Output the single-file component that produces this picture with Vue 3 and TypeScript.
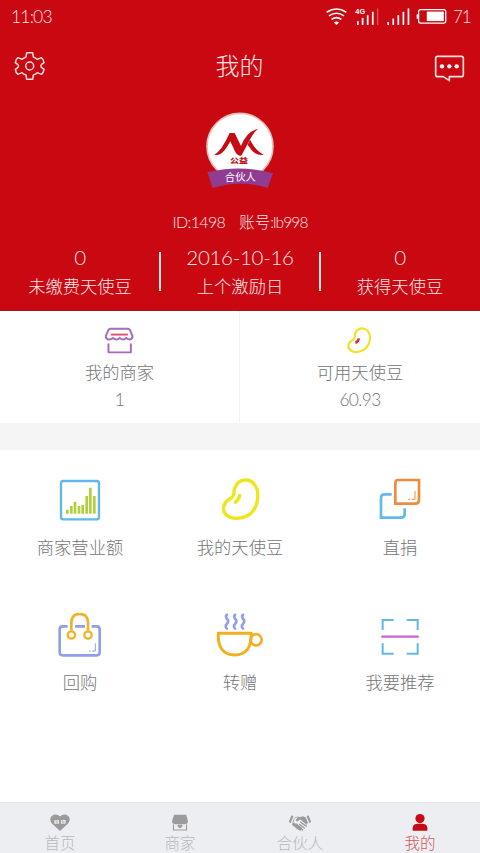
<script setup lang="ts">
interface Stat { value: string; label: string }
interface Entry { icon: string; label: string }

const stats: Stat[] = [
  { value: '0', label: '未缴费天使豆' },
  { value: '2016-10-16', label: '上个激励日' },
  { value: '0', label: '获得天使豆' },
]

const entries: Entry[] = [
  { icon: 'chart', label: '商家营业额' },
  { icon: 'bean', label: '我的天使豆' },
  { icon: 'donate', label: '直捐' },
  { icon: 'bag', label: '回购' },
  { icon: 'cup', label: '转赠' },
  { icon: 'scan', label: '我要推荐' },
]

const tabs: Entry[] = [
  { icon: 'heart', label: '首页' },
  { icon: 'shop', label: '商家' },
  { icon: 'hands', label: '合伙人' },
  { icon: 'user', label: '我的' },
]
const activeTab = 'user'
</script>

<template>
  <div class="screen">
    <header class="hero">
      <div class="status">
        <span class="num clock">11:03</span>
        <div class="status-right">
          <svg class="wifi" viewBox="256 20 70 58" fill="none" stroke="#fff" stroke-width="5">
            <path d="M261 36Q291 16 321 36M268 47Q291 31 314 47M276 58Q291 47 306 58" />
            <path d="M283 67Q291 61 299 67L291 75Z" fill="#fff" stroke="none" />
          </svg>
          <svg class="cell" viewBox="346 22 74 56">
            <g fill="#fff"><rect x="352" y="64" width="5" height="11" /><rect x="366" y="54" width="5" height="21" /><rect x="381" y="46" width="5" height="29" /><rect x="396" y="36" width="5" height="39" /></g>
            <rect x="411" y="26" width="4" height="49" fill="#e0525a" />
            <text x="347" y="42" font-size="19" font-weight="700" fill="#fff" textLength="29" lengthAdjust="spacingAndGlyphs">4G</text>
          </svg>
          <svg class="bars" viewBox="440 22 74 56" fill="#fff">
            <rect x="444" y="66" width="5" height="9" /><rect x="459" y="56" width="5" height="19" /><rect x="474" y="46" width="5" height="29" /><rect x="489" y="36" width="5" height="39" /><rect x="504" y="26" width="5" height="49" />
          </svg>
          <svg class="battery" viewBox="529 24 96 52">
            <rect x="536" y="29" width="83" height="41" rx="6" fill="none" stroke="#fff" stroke-width="4" />
            <rect x="530" y="43" width="6" height="14" rx="2" fill="#fff" /><rect x="561" y="35" width="52" height="29" fill="#fff" />
          </svg>
          <span class="num level">71</span>
        </div>
      </div>

      <div class="titlebar">
        <svg class="gear" viewBox="42 153 93 90" fill="none" stroke="#ffe0e0" stroke-width="4.5" stroke-linejoin="round">
          <path d="M80 158h18l2 13q7 3 12 7l12-5q7 5 8 15l-8 6q-3 4 0 8l8 6q-1 10-8 15l-12-5q-5 5-12 7l-2 13h-18l-2-13q-7-2-12-7l-12 5q-7-5-8-15l8-6q3-4 0-8l-8-6q1-10 8-15l12 5q5-4 12-7Z" />
          <circle cx="89" cy="198" r="12" />
        </svg>
        <h1>我的</h1>
        <svg class="message" viewBox="582 161 93 84">
          <path d="M593 168h71q6 0 6 6v49q0 6-6 6h-36v12l-18-12h-17q-6 0-6-6v-49q0-6 6-6Z" fill="none" stroke="#ffe0e0" stroke-width="5" stroke-linejoin="round" />
          <g fill="#fff"><circle cx="606" cy="198" r="6.5" /><circle cx="628" cy="198" r="6.5" /><circle cx="650" cy="198" r="6.5" /></g>
        </svg>
      </div>

      <svg class="badge" viewBox="135 33 210 234">
        <circle cx="240" cy="139" r="99" fill="#fff" stroke="#e6bcb9" stroke-width="5" />
        <g fill="#c80a14">
          <path d="M163 164Q184 154 209 99H224L243 138Q260 94 294 87Q280 97 266 126L244 167Q231 168 224 152L211 124Q193 158 179 163Q171 166 163 164Z" />
          <path d="M270 119Q288 154 311 164Q289 168 275 151L263 134Z" />
        </g>
        <text x="237" y="188" text-anchor="middle" class="badge-mark" textLength="54" lengthAdjust="spacingAndGlyphs">公益</text>
        <path d="M142 217Q240 192 339 220L323 264Q240 238 158 264Z" fill="#903c91" />
        <text x="241" y="244" text-anchor="middle" class="badge-role" textLength="93">合伙人</text>
      </svg>

      <div class="account"><span class="id">ID:1498</span><span class="name">账号<i>:lb998</i></span></div>

      <div class="stats">
        <div v-for="(s, i) in stats" :key="i" class="stat">
          <span class="num">{{ s.value }}</span>
          <span>{{ s.label }}</span>
        </div>
      </div>
    </header>

    <section class="summary">
      <div class="card">
        <svg class="stall" viewBox="312 46 93 88" fill="none" stroke="#a76cc0" stroke-width="6" stroke-linecap="round" stroke-linejoin="round">
          <path d="M331 54h54q3 0 5 4l8 19q0 9-9 10-7 0-10-5-4 5-10 5-7 0-10-5-4 5-10 5t-10-5q-4 5-11 5-11-1-11-11l8-18q2-4 6-4ZM325 101v25h68v-25" />
          <path d="M332 72h52" stroke="#e05275" stroke-linecap="butt" />
        </svg>
        <span class="label">我的商家</span>
        <span class="num">1</span>
      </div>
      <div class="card">
        <svg class="bean-small" viewBox="319 44 84 94" fill="none" stroke-linecap="round">
          <path d="M347 65Q355 50 371 52Q390 55 393 77Q395 104 375 120Q354 134 334 125Q318 116 326 99Q330 93 339 88Q346 82 344 74Q344 69 347 65Z" stroke="#efe229" stroke-width="7" />
          <path d="M357 84Q356 95 346 99" stroke="#d92b4b" stroke-width="8" stroke-linecap="butt" />
        </svg>
        <span class="label">可用天使豆</span>
        <span class="num">60.93</span>
      </div>
    </section>

    <main class="grid">
      <div v-for="e in entries" :key="e.icon" class="entry">
        <svg v-if="e.icon === 'chart'" viewBox="174 54 132 132">
          <rect x="183" y="63" width="114" height="115" rx="7" fill="none" stroke="#61b7e8" stroke-width="7" />
          <path d="M202 161v-12M214 161v-23M225 161v-36M237 161v-23M248 161v-26M260 161v-53M271 161v-78M283 161v-53" stroke="#b1d13c" stroke-width="8" />
        </svg>
        <svg v-else-if="e.icon === 'bean'" viewBox="654 54 132 132" fill="none" stroke="#efe51d" stroke-linecap="round">
          <path d="M705 83Q714 60 735 60Q762 59 772 91Q779 134 752 161Q725 181 691 172Q667 162 671 140Q674 126 687 118Q704 110 702 94Q702 88 705 83Z" stroke-width="10" />
          <path d="M719 106Q717 119 706 127" stroke-width="10" />
        </svg>
        <svg v-else-if="e.icon === 'donate'" viewBox="414 54 132 132" fill="none" stroke-width="8">
          <path d="M455 103H434q-11 0-11 11v59h60q11 0 11-11v-17" stroke="#63b9e8" />
          <path d="M474 60h63v60q0 11-11 11h-60V70q0-10 8-10Z" stroke="#ee8c3d" />
          <path d="M525 93v25h-10M511 118h-6" stroke="#ee8c3d" stroke-width="3" />
        </svg>
        <svg v-else-if="e.icon === 'bag'" viewBox="174 51 132 132" fill="none" stroke-width="8">
          <path d="M203 91h-15q-9 0-9 9v69q0 9 9 9h102q9 0 9-9v-69q0-9-9-9h-15M225 91h30" stroke="#939fe4" />
          <path d="M214 103V78Q216 54 239 54T264 78V103" stroke="#f1b225" /><circle cx="214" cy="117" r="11" stroke="#f1b225" stroke-width="7" /><circle cx="264" cy="117" r="11" stroke="#f1b225" stroke-width="7" />
          <path d="M286 142v23h-10M272 165h-5" stroke="#939fe4" stroke-width="3" />
        </svg>
        <svg v-else-if="e.icon === 'cup'" class="cup" viewBox="646 52 146 136" fill="none" stroke-linecap="round">
          <path d="M653 113H753Q755 178 703 179Q650 178 653 113Z" stroke="#f2b020" stroke-width="9" stroke-linejoin="round" />
          <circle cx="768" cy="133" r="17" stroke="#f2b020" stroke-width="8" />
          <path d="M679 57q-5 5 0 12 8 8 0 16-7 7 0 14M704 57q-5 5 0 12 8 8 0 16-7 7 0 14M728 57q-5 5 0 12 8 8 0 16-7 7 0 14" stroke="#939fe8" stroke-width="8" />
        </svg>
        <svg v-else viewBox="414 54 132 132" fill="none">
          <path d="M428 105V75h33M500 75h33v30M428 145v31h33M500 176h33v-31" stroke="#5eb9e7" stroke-width="6" />
          <path d="M424 125h112" stroke="#cb65cc" stroke-width="7" />
        </svg>
        <span>{{ e.label }}</span>
      </div>
    </main>

    <nav class="tabs">
      <div v-for="t in tabs" :key="t.icon" :class="['tab', { active: t.icon === activeTab }]">
        <svg v-if="t.icon === 'heart'" viewBox="144 54 72 58">
          <path d="M180 109L156 87Q145 72 155 63Q168 54 180 65Q192 54 205 63Q215 72 204 87Z" fill="currentColor" />
          <path d="M163 75h14v12h-14zM183 75h14v12h-14z" fill="#edeef2" /><path d="M166 78h3v3M172 77l3 4M168 84h6M187 76v5h7M187 84h6" stroke="currentColor" stroke-width="2" fill="none" />
        </svg>
        <svg v-else-if="t.icon === 'shop'" viewBox="504 54 72 58">
          <path d="M522 59h37l5 19q1 10-8 10H524q-9 0-8-10Z" fill="currentColor" />
          <path d="M520 89v17h40V89" fill="none" stroke="currentColor" stroke-width="3.5" /><path d="M540 101l-7-6q-2-5 2-6l5 2 5-2q4 1 2 6Z" fill="currentColor" />
        </svg>
        <svg v-else-if="t.icon === 'hands'" viewBox="864 54 72 58">
          <g fill="currentColor"><path d="M874 61l6 3-9 21-5-4ZM926 61l-6 3 9 21 5-4Z" />
          <path d="M884 68l10-3 6 2 8-3 10 4 6 16-4 6-19-16-9 5q-6 1-5-4l7-9-10 4-5 14-3-2Z" />
          <path d="M876 86l6-3 4 4 5-1 3 5 5 1 2 5 4 1 1 7-5 3-8-4-9-7-8-6Z" /></g>
          <path d="M902 82l17 12M899 89l14 11M898 97l10 9" stroke="currentColor" stroke-width="4" stroke-linecap="round" />
        </svg>
        <svg v-else viewBox="1224 54 72 58" fill="currentColor">
          <circle cx="1260" cy="71" r="14" /><path d="M1238 108Q1235 87 1252 87H1268Q1286 88 1282 108Z" />
        </svg>
        <span>{{ t.label }}</span>
      </div>
    </nav>
  </div>
</template>

<style>
body { margin: 0; background: #fff; }
</style>

<style scoped>
.screen { width: 480px; height: 853px; display: flex; flex-direction: column; overflow: hidden; background: #fff; color: #757575; font-family: Lato, "Noto Sans CJK SC", sans-serif; font-weight: 300; font-size: 17.3px; }
svg { display: block; flex: none; }
span { white-space: nowrap; }
.hero { height: 311px; box-sizing: border-box; background: #c90812; color: #ffe5e5; display: flex; flex-direction: column; align-items: center; flex: none; border-bottom: 1px solid #9d1422; }
.status { width: 100%; height: 33px; display: flex; justify-content: space-between; align-items: center; box-sizing: border-box; padding: 0 10px 0 11px; font-size: 18px; }
.clock { font-size: 17.5px; letter-spacing: -.8px; }
.status-right { display: flex; align-items: center; }
.wifi { width: 23px; height: 19px; margin-right: 7px; }
.cell { width: 25px; height: 19px; margin-right: 6px; font-family: "Liberation Sans", sans-serif; }
.bars { width: 25px; height: 19px; margin-right: 5px; }
.battery { width: 32px; height: 17px; margin-right: 5px; }
.level { font-size: 17px; letter-spacing: -1px; width: 17px; }
.titlebar { width: 100%; height: 65px; display: flex; align-items: center; justify-content: space-between; box-sizing: border-box; padding: 0 15px 0 14px; }
.gear { width: 31px; height: 30px; }
.message { width: 31px; height: 28px; margin-top: 4px; }
h1 { margin: 0; font-size: 24px; font-weight: 300; line-height: 30px; }
.badge { width: 70px; height: 78px; margin-top: 13px; }
.badge-mark { font: 900 21px "Noto Sans CJK SC", sans-serif; fill: #c80a14; }
.badge-role { font: 400 31px "Noto Sans CJK SC", sans-serif; fill: #fff; }
.account { display: flex; gap: 14px; height: 24px; line-height: 24px; margin-top: 21px; font-size: 16px; }
.id { letter-spacing: -.65px; }
.name { font-size: 15.5px; }
.name i { font-style: normal; letter-spacing: -.9px; }
.stats { display: grid; grid-template-columns: repeat(3, 160px); margin-top: 8px; }
.stat { display: flex; flex-direction: column; align-items: center; position: relative; line-height: 29px; }
.stat .num { font-size: 20.5px; line-height: 30px; letter-spacing: -.3px; }
.stat + .stat::before { content: ""; position: absolute; left: -1px; top: 10px; width: 2px; height: 39px; background: #ffe5e5; }
.summary { display: grid; grid-template-columns: 239px 1fr; height: 112px; border-bottom: 27px solid #f5f5f5; flex: none; }
.card { display: flex; flex-direction: column; align-items: center; line-height: 27px; }
.card + .card { border-left: 1px solid #f3f3f3; }
.card .num { letter-spacing: -.6px; }
.card svg { height: 29px; margin-top: 15px; margin-bottom: 4px; }
.stall { width: 31px; }
.bean-small { width: 28px; }
.grid { display: grid; grid-template-columns: repeat(3, 160px); grid-auto-rows: 135px; padding-top: 28px; flex: 1; }
.entry { display: flex; flex-direction: column; align-items: center; line-height: 30px; gap: 11px; }
.entry svg { width: 44px; height: 44px; }
.entry .cup { width: 48px; height: 45px; margin-bottom: -1px; }
.tabs { height: 51px; display: grid; grid-template-columns: repeat(4, 1fr); background: #edeef2; flex: none; box-sizing: border-box; border-top: 1px solid #e4e5e8; }
.tab { display: flex; flex-direction: column; align-items: center; color: #9b9b9b; padding-top: 10px; font-size: 15.5px; line-height: 22px; }
.tab svg { width: 24px; height: 19px; }
.tab span { color: #b9b9bd; }
.tab.active { color: #c80a14; }
.tab.active span { color: #cf5a5a; }
</style>
